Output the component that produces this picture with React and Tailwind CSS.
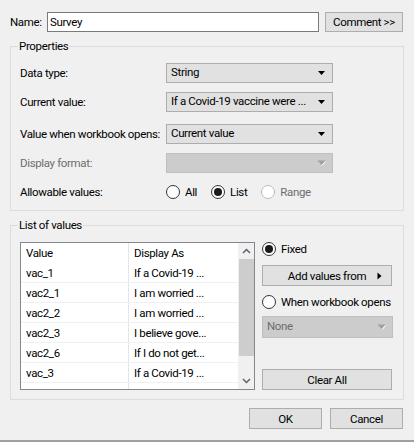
import React from "react";

function Arrow({ disabled }) {
  return (
    <svg width="9" height="6" viewBox="0 0 9 6" className="shrink-0">
      {disabled ? (
        <>
          <path d="M0.5 0.5 L8.5 0.5 L4.5 5 Z" fill="#a0a0a0" />
          <path d="M5 5.5 L8.5 1.5" stroke="#ffffff" strokeWidth="1" />
        </>
      ) : (
        <path d="M1 1 L8 1 L4.5 5 Z" fill="#000" />
      )}
    </svg>
  );
}

function Select({ value, disabled, w = "w-[167px]", h = "h-[20px]" }) {
  return (
    <div
      className={`${w} ${h} flex items-center justify-between pl-[4px] pr-[6px] border ${
        disabled ? "bg-[#cccccc] border-[#bfbfbf] text-[#6d6d6d]" : "bg-[#e1e1e1] border-[#adadad]"
      }`}
    >
      <span className="whitespace-nowrap leading-none">{value}</span>
      <Arrow disabled={disabled} />
    </div>
  );
}

function Radio({ checked, disabled, label }) {
  return (
    <div className="flex items-center gap-[5px] whitespace-nowrap">
      <div
        className={`w-[14px] h-[14px] shrink-0 rounded-full border bg-white flex items-center justify-center ${
          disabled ? "border-[#bcbcbc]" : "border-[#333333]"
        }`}
      >
        {checked && <div className="w-[8px] h-[8px] rounded-full bg-[#1a1a1a]" />}
      </div>
      <span className={disabled ? "text-[#6d6d6d]" : ""}>{label}</span>
    </div>
  );
}

function Button({ children, className = "" }) {
  return (
    <div
      className={`flex items-center justify-center border border-[#adadad] bg-[#e1e1e1] whitespace-nowrap ${className}`}
    >
      {children}
    </div>
  );
}

const rows = [
  ["vac_1", "If a Covid-19 ..."],
  ["vac2_1", "I am worried ..."],
  ["vac2_2", "I am worried ..."],
  ["vac2_3", "I believe gove..."],
  ["vac2_6", "If I do not get..."],
  ["vac_3", "If a Covid-19 ..."],
  ["Add", ""],
];

export default function App() {
  return (
    <div className="w-[414px] h-[442px] bg-[#f0f0f0] overflow-hidden font-['Roboto',sans-serif] text-[11.5px] tracking-[-0.35px] leading-[16px] text-black flex flex-col">
      {/* top row */}
      <div className="flex items-center pt-[11px] pl-[10px]">
        <span className="w-[37px]">Name:</span>
        <div className="w-[272px] h-[20px] border border-[#7a7a7a] bg-white pl-[2px] flex items-center">
          Survey
        </div>
        <Button className="ml-[6px] w-[78px] h-[20px] mt-[1px]">Comment &gt;&gt;</Button>
      </div>

      {/* Properties */}
      <fieldset className="mx-[10px] mt-[6px] border border-[#dcdcdc] pl-[9px] pb-[10px]">
        <legend className="ml-[-2px] px-[1px] leading-[16px]">Properties</legend>
        <div className="flex items-center mt-[9px]">
          <span className="w-[146px] whitespace-nowrap">Data type:</span>
          <Select value="String" />
        </div>
        <div className="flex items-center mt-[9px]">
          <span className="w-[146px] whitespace-nowrap">Current value:</span>
          <Select value="If a Covid-19 vaccine were ..." />
        </div>
        <div className="flex items-center mt-[12px]">
          <span className="w-[146px] whitespace-nowrap">Value when workbook opens:</span>
          <Select value="Current value" />
        </div>
        <div className="flex items-center mt-[9px]">
          <span className="w-[146px] whitespace-nowrap text-[#6d6d6d]">Display format:</span>
          <Select value="" disabled />
        </div>
        <div className="flex items-center mt-[10px] h-[17px]">
          <span className="w-[146px] whitespace-nowrap">Allowable values:</span>
          <div className="flex items-center gap-[14px]">
            <Radio label="All" />
            <Radio label="List" checked />
            <Radio label="Range" disabled />
          </div>
        </div>
      </fieldset>

      {/* List of values */}
      <fieldset className="mx-[10px] mt-[6px] border border-[#dcdcdc] pl-[9px] pb-[9px]">
        <legend className="ml-[-2px] px-[1px] leading-[16px]">List of values</legend>
        <div className="flex mt-[9px]">
          <div className="w-[235px] h-[148px] border border-[#828790] bg-white flex overflow-hidden">
            <div className="w-[217px] flex flex-col">
              <div className="flex h-[20px] shrink-0 items-center">
                <div className="w-[108px] pl-[5px] h-full flex items-center border-r border-[#e5e5e5]">Value</div>
                <div className="pl-[5px]">Display As</div>
              </div>
              {rows.map(([v, d], i) => (
                <div key={i} className="flex h-[20px] shrink-0 border-b border-[#f0f0f0]">
                  <div className="w-[108px] pl-[5px] h-full flex items-center border-r border-[#e5e5e5]">{v}</div>
                  <div className="pl-[5px] h-full flex items-center whitespace-nowrap">{d}</div>
                </div>
              ))}
            </div>
            <div className="w-[16px] bg-[#f0f0f0] flex flex-col items-center">
              <div className="h-[16px] flex items-center justify-center shrink-0">
                <svg width="9" height="6" viewBox="0 0 9 6">
                  <path d="M1 5 L4.5 1.5 L8 5" stroke="#606060" strokeWidth="1.5" fill="none" />
                </svg>
              </div>
              <div className="w-[15px] h-[97px] bg-[#cdcdcd] shrink-0" />
              <div className="flex-1" />
              <div className="h-[16px] flex items-center justify-center shrink-0">
                <svg width="9" height="6" viewBox="0 0 9 6">
                  <path d="M1 1 L4.5 4.5 L8 1" stroke="#606060" strokeWidth="1.5" fill="none" />
                </svg>
              </div>
            </div>
          </div>

          <div className="ml-[7px] w-[131px] flex flex-col">
            <div className="h-[14px] flex items-center">
              <Radio label="Fixed" checked />
            </div>
            <Button className="mt-[9px] w-[130px] h-[21px] relative">
              <span>Add values from</span>
              <svg width="5" height="8" viewBox="0 0 5 8" className="absolute right-[9px] top-[6px]">
                <path d="M0.5 0.5 L4.5 4 L0.5 7.5 Z" fill="#000" />
              </svg>
            </Button>
            <div className="mt-[9px] h-[14px] flex items-center">
              <Radio label="When workbook opens" />
            </div>
            <div className="mt-[7px]">
              <Select value="None" disabled w="w-[131px]" h="h-[22px]" />
            </div>
            <div className="flex-1" />
            <Button className="w-[130px] h-[21px]">Clear All</Button>
          </div>
        </div>
      </fieldset>

      {/* bottom buttons */}
      <div className="flex justify-end pr-[11px] mt-[8px] gap-[8px]">
        <Button className="w-[73px] h-[21px]">OK</Button>
        <Button className="w-[73px] h-[21px]">Cancel</Button>
      </div>
      <div className="flex-1" />
      <div className="h-[2px] bg-[#a0a0a0]" />
    </div>
  );
}
